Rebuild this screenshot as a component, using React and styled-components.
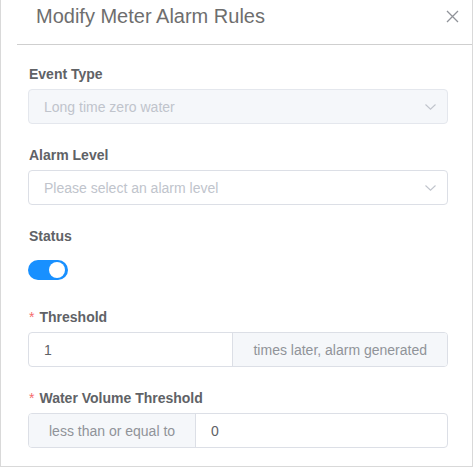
import styled, { createGlobalStyle } from "styled-components";

const GlobalStyle = createGlobalStyle`
  html, body {
    margin: 0;
    padding: 0;
    background: #fff;
  }
  body {
    font-family: "Liberation Sans", Arial, sans-serif;
  }
  * {
    box-sizing: border-box;
  }
`;

const Chevron = () => (
  <svg width="11" height="6" viewBox="0 0 11 6" fill="none">
    <path d="M0.5 0.5 L5.5 5.2 L10.5 0.5" stroke="#c0c4cc" strokeWidth="1.1" />
  </svg>
);

const CloseIcon = () => (
  <svg width="13" height="13" viewBox="0 0 13 13" fill="none">
    <path d="M1 1 L12 12 M12 1 L1 12" stroke="#909399" strokeWidth="1.3" />
  </svg>
);

export default function App() {
  return (
    <>
      <GlobalStyle />
      <Dialog>
        <Header>
          <Title>Modify Meter Alarm Rules</Title>
          <CloseBtn>
            <CloseIcon />
          </CloseBtn>
        </Header>

        <Body>
          <Item>
            <Label>Event Type</Label>
            <Select disabled>
              <SelectText>Long time zero water</SelectText>
              <Chevron />
            </Select>
          </Item>

          <Item>
            <Label>Alarm Level</Label>
            <Select>
              <SelectText>Please select an alarm level</SelectText>
              <Chevron />
            </Select>
          </Item>

          <Item>
            <Label>Status</Label>
            <SwitchRow>
              <Switch $on>
                <Knob $on />
              </Switch>
            </SwitchRow>
          </Item>

          <Item>
            <Label $required>Threshold</Label>
            <Group>
              <Field $grow>1</Field>
              <Addon $side="right">times later, alarm generated</Addon>
            </Group>
          </Item>

          <Item>
            <Label $required>Water Volume Threshold</Label>
            <Group>
              <Addon $side="left">less than or equal to</Addon>
              <Field $grow>0</Field>
            </Group>
          </Item>
        </Body>
      </Dialog>
    </>
  );
}

const Dialog = styled.div`
  width: 473px;
  height: 467px;
  border: 1px solid #d9d9d9;
  border-top: none;
  background: #fff;
  overflow: hidden;
`;

const Header = styled.div`
  display: flex;
  align-items: flex-start;
  justify-content: space-between;
  height: 45px;
  margin-left: 16px;
  padding-left: 19px;
  padding-right: 13px;
  border-bottom: 1px solid #cfcfcf;
`;

const Title = styled.div`
  font-size: 20px;
  line-height: 33px;
  color: #6e6e6e;
`;

const CloseBtn = styled.div`
  display: flex;
  padding-top: 10px;
  cursor: pointer;
`;

const Body = styled.div`
  padding: 19px 24px 0 27px;
`;

const Item = styled.div`
  margin-bottom: 21px;
`;

const Label = styled.div`
  height: 20px;
  line-height: 20px;
  margin-bottom: 5px;
  padding-left: 1px;
  font-size: 14px;
  font-weight: 700;
  color: #606266;

  &::before {
    content: ${(p) => (p.$required ? '"*"' : "none")};
    color: #f56c6c;
    font-weight: 400;
    margin-right: 5px;
  }
`;

const Select = styled.div`
  display: flex;
  align-items: center;
  justify-content: space-between;
  height: 35px;
  padding: 0 11px 0 15px;
  border: 1px solid ${(p) => (p.disabled ? "#e4e7ed" : "#dcdfe6")};
  border-radius: 4px;
  background: ${(p) => (p.disabled ? "#f5f7fa" : "#fff")};
  cursor: ${(p) => (p.disabled ? "not-allowed" : "pointer")};
`;

const SelectText = styled.span`
  font-size: 14px;
  color: #c0c4cc;
`;

const SwitchRow = styled.div`
  display: flex;
  height: 35px;
  padding-top: 9px;
`;

const Switch = styled.div`
  position: relative;
  width: 40px;
  height: 20px;
  border-radius: 10px;
  background: ${(p) => (p.$on ? "#1890ff" : "#dcdfe6")};
`;

const Knob = styled.span`
  position: absolute;
  top: 2px;
  left: ${(p) => (p.$on ? "21px" : "2px")};
  width: 16px;
  height: 16px;
  border-radius: 50%;
  background: #fff;
`;

const Group = styled.div`
  display: flex;
  height: 35px;
  border: 1px solid #dcdfe6;
  border-radius: 4px;
  overflow: hidden;
`;

const Field = styled.div`
  flex: ${(p) => (p.$grow ? 1 : "none")};
  display: flex;
  align-items: center;
  padding: 0 15px;
  font-size: 14px;
  color: #606266;
`;

const Addon = styled.div`
  display: flex;
  align-items: center;
  padding: 0 20px;
  background: #f5f7fa;
  font-size: 14px;
  color: #909399;
  white-space: nowrap;
  border-left: ${(p) => (p.$side === "right" ? "1px solid #dcdfe6" : "none")};
  border-right: ${(p) => (p.$side === "left" ? "1px solid #dcdfe6" : "none")};
`;
